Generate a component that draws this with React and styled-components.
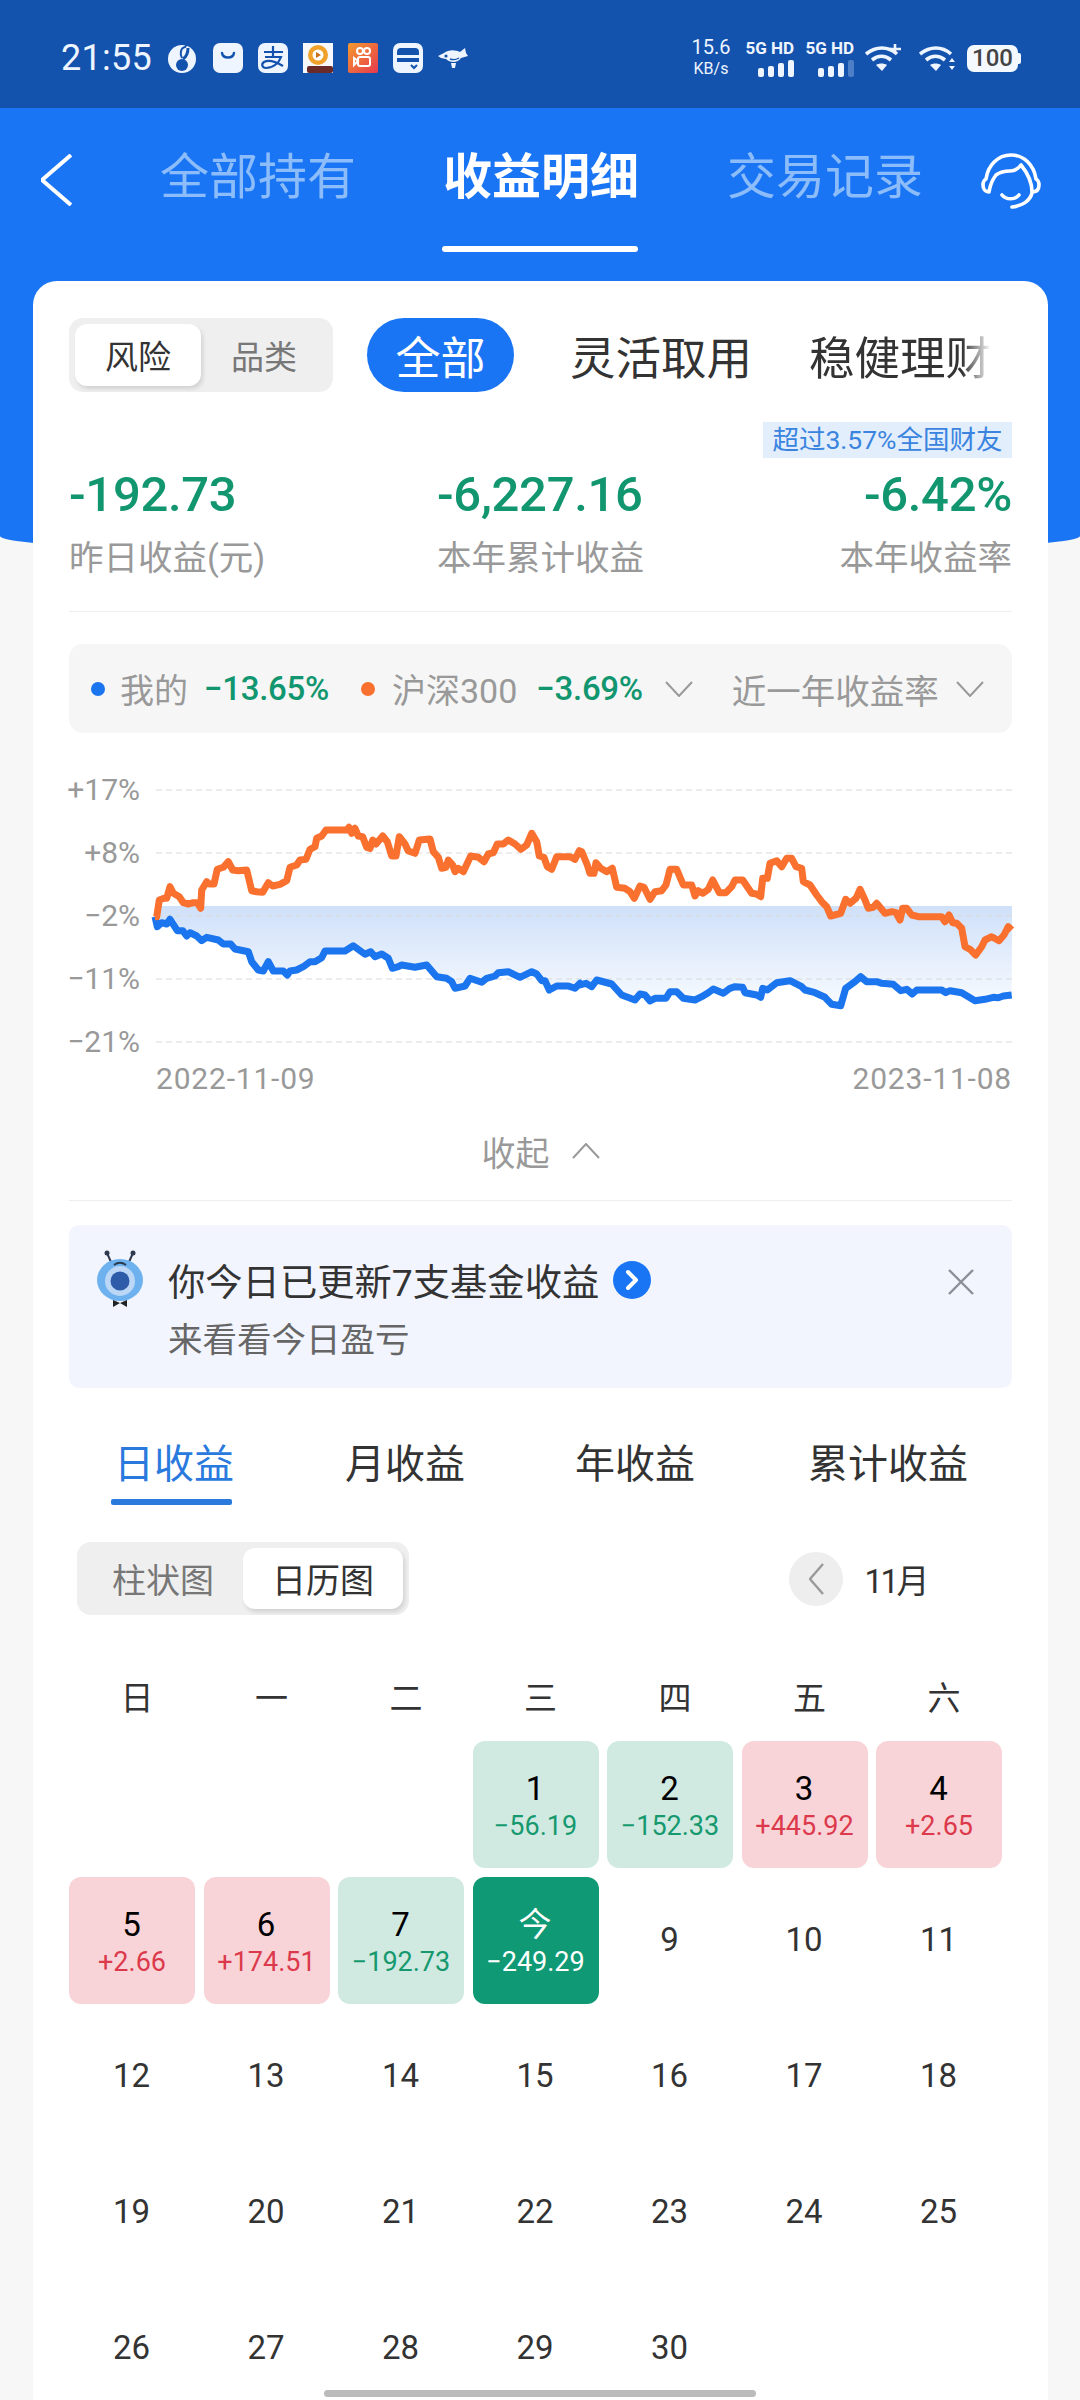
import React from 'react'
import styled, { createGlobalStyle } from 'styled-components'

const GlobalStyle = createGlobalStyle`
  html, body {
    margin: 0;
    padding: 0;
    background: #f7f7f7;
  }
  * {
    box-sizing: border-box;
  }
`

const blue = '#1a75f5'
const green = '#12966f'
const grey = '#999999'
const sans = `Roboto, "Noto Sans CJK SC", sans-serif`

const Page = styled.div`
  position: relative;
  width: 1080px;
  height: 2400px;
  overflow: hidden;
  background: #f7f7f7;
  font-family: ${sans};
  color: #333;
  &::before {
    content: '';
    position: absolute;
    top: 108px;
    left: 0;
    right: 0;
    height: 448px;
    background: ${blue};
    border-radius: 0 0 50% 50% / 0 0 20px 20px;
  }
`

const StatusBar = styled.div`
  position: relative;
  height: 108px;
  padding: 8px 62px 0 61px;
  display: flex;
  align-items: center;
  background: #1352ad;
  color: #eef5ff;
`

const Time = styled.span`
  font-size: 36px;
  width: 107px;
  letter-spacing: 0.3px;
`

const AppIcons = styled.div`
  display: flex;
  gap: 15px;
`

const StatusRight = styled.div`
  margin-left: auto;
  display: flex;
  align-items: center;
`

const Speed = styled.div`
  width: 40px;
  margin-right: 14px;
  display: flex;
  flex-direction: column;
  align-items: center;
  white-space: nowrap;
`

const SpeedValue = styled.span`
  font-size: 20px;
  line-height: 21px;
`

const SpeedUnit = styled.span`
  font-size: 16px;
  line-height: 21px;
`

const Signal = styled.div`
  width: 49px;
  margin-right: 11px;
  display: flex;
  flex-direction: column;
  align-items: flex-end;
  font-size: 17px;
  font-weight: 700;
  line-height: 19px;
  white-space: nowrap;
`

const Bars = styled.div`
  display: flex;
  align-items: flex-end;
  gap: 4px;
  height: 17px;
  margin-top: 2px;
`

const Bar = styled.i`
  display: block;
  width: 6px;
  height: ${p => p.$h}px;
  border-radius: 2px;
  background: ${p => (p.$off ? '#4d7fc6' : '#eef5ff')};
`

const WifiSvg = styled.svg`
  width: 37px;
  height: 30px;
  margin-right: ${p => p.$mr || 0}px;
`

const Battery = styled.div`
  width: 51px;
  height: 27px;
  margin-left: 11px;
  position: relative;
  border-radius: 7px;
  background: #f4f8ff;
  color: #444;
  font-size: 24px;
  font-weight: 500;
  line-height: 27px;
  text-align: center;
  &::after {
    content: '';
    position: absolute;
    right: -3px;
    top: 8px;
    width: 3px;
    height: 11px;
    border-radius: 0 2px 2px 0;
    background: #f4f8ff;
  }
`

const NavBar = styled.div`
  position: relative;
  height: 173px;
  padding-left: 41px;
  display: grid;
  grid-template-columns: 119px 283px 284px 254px 60px;
  align-items: start;
`

const BackBtn = styled.div`
  padding-top: 46px;
  display: flex;
`

const NavTab = styled.div`
  padding-top: 38px;
  width: 196px;
  display: flex;
  flex-direction: column;
  font-size: 49px;
  line-height: 64px;
  font-weight: ${p => (p.$active ? 700 : 400)};
  color: ${p => (p.$active ? '#fff' : '#8cbdfa')};
  white-space: nowrap;
`

const NavLine = styled.div`
  width: 196px;
  height: 6px;
  margin: 36px 0 0 -1px;
  border-radius: 3px;
  background: #fff;
`

const Support = styled.div`
  padding-top: 44px;
  display: flex;
`

const Card = styled.div`
  position: relative;
  width: 1015px;
  height: 2119px;
  margin-left: 33px;
  padding: 37px 36px 0;
  border-radius: 24px 24px 0 0;
  background: #fff;
`

const FilterRow = styled.div`
  height: 74px;
  display: flex;
  align-items: center;
`

const Segment = styled.div`
  display: flex;
  padding: 6px;
  height: ${p => p.$h}px;
  border-radius: 14px;
  background: #efefef;
`

const SegmentItem = styled.div`
  width: ${p => p.$w}px;
  display: flex;
  align-items: center;
  justify-content: center;
  font-size: ${p => p.$size}px;
  border-radius: 12px;
  color: ${p => (p.$active ? '#333' : '#777')};
  background: ${p => (p.$active ? '#fff' : 'transparent')};
  box-shadow: ${p => (p.$active ? '2px 3px 4px rgba(0, 0, 0, 0.12)' : 'none')};
`

const AllPill = styled.div`
  width: 147px;
  height: 74px;
  margin-left: 34px;
  display: flex;
  align-items: center;
  justify-content: center;
  border-radius: 37px;
  background: ${blue};
  color: #fff;
  font-size: 45px;
`

const Filter = styled.div`
  margin-left: ${p => p.$ml}px;
  font-size: 45.5px;
  color: #333;
  white-space: nowrap;
`

const FadedFilter = styled(Filter)`
  width: 182px;
  overflow: hidden;
  -webkit-mask-image: linear-gradient(to right, #000 84%, transparent 100%);
  mask-image: linear-gradient(to right, #000 84%, transparent 100%);
`

const BadgeRow = styled.div`
  margin-top: 30px;
  display: flex;
  justify-content: flex-end;
`

const Badge = styled.div`
  width: 249px;
  height: 36px;
  background: #e3eefc;
  color: #3a84e0;
  font-size: 26.5px;
  line-height: 36px;
  text-align: center;
  white-space: nowrap;
`

const Stats = styled.div`
  margin-top: 7px;
  display: grid;
  grid-template-columns: 368px 1fr auto;
`

const Stat = styled.div`
  display: flex;
  flex-direction: column;
  align-items: ${p => (p.$right ? 'flex-end' : 'flex-start')};
`

const StatValue = styled.div`
  font-size: 49px;
  font-weight: 500;
  line-height: 60px;
  letter-spacing: -0.3px;
  color: ${green};
`

const StatLabel = styled.div`
  margin-top: 11px;
  font-size: 34.5px;
  line-height: 44px;
  color: ${grey};
  white-space: nowrap;
`

const Divider = styled.div`
  height: 1px;
  margin-top: ${p => p.$mt}px;
  background: #eeeeee;
`

const Legend = styled.div`
  height: 89px;
  margin-top: 32px;
  padding-left: 22px;
  display: flex;
  align-items: center;
  border-radius: 14px;
  background: #f6f6f6;
  color: ${grey};
  font-size: 34px;
  white-space: nowrap;
`

const Dot = styled.i`
  display: block;
  width: 14px;
  height: 14px;
  margin-right: ${p => p.$mr}px;
  border-radius: 50%;
  background: ${p => p.$c};
`

const LegendValue = styled.span`
  margin: 0 ${p => p.$mr}px 0 ${p => p.$ml}px;
  font-size: 33px;
  font-weight: 500;
  letter-spacing: -0.3px;
  color: ${green};
`

const LegendRange = styled.span`
  margin-left: 39px;
  font-size: 34.5px;
`

const LegendChevron = styled.svg`
  width: 28px;
  height: 16px;
  margin-left: ${p => p.$ml}px;
`

const ChartRow = styled.div`
  height: 292px;
  margin-top: 37px;
  display: flex;
  align-items: flex-start;
`

const AxisCol = styled.div`
  width: 71px;
  height: 292px;
  margin-right: 16px;
  display: flex;
  flex-direction: column;
  justify-content: space-between;
  align-items: flex-end;
  font-size: 30px;
  line-height: 40px;
  color: ${grey};
  white-space: nowrap;
`

const ChartSvg = styled.svg`
  display: block;
  overflow: visible;
`

const Dates = styled.div`
  margin-top: 2px;
  margin-left: 87px;
  display: flex;
  justify-content: space-between;
  font-size: 30px;
  line-height: 30px;
  letter-spacing: 0.8px;
  color: ${grey};
`

const Collapse = styled.div`
  height: 44px;
  margin-top: 35px;
  display: flex;
  align-items: center;
  justify-content: center;
  gap: 22px;
  font-size: 34px;
  color: ${grey};
`

const Notice = styled.div`
  position: relative;
  height: 163px;
  margin-top: 24px;
  padding: 25px 0 0 28px;
  display: flex;
  align-items: flex-start;
  border-radius: 10px;
  background: #f2f5fe;
`

const NoticeText = styled.div`
  margin: 5px 0 0 25px;
  display: flex;
  flex-direction: column;
  gap: 10px;
`

const NoticeTitle = styled.div`
  height: 50px;
  display: flex;
  align-items: center;
  gap: 14px;
  font-size: 37.3px;
  color: #333;
  white-space: nowrap;
`

const NoticeSub = styled.div`
  font-size: 34.5px;
  line-height: 50px;
  color: #666;
`

const CloseBtn = styled.svg`
  width: 28px;
  height: 28px;
  margin: 18px 37px 0 auto;
`

const Periods = styled.div`
  margin-top: 47px;
  padding-left: 45px;
  display: grid;
  grid-template-columns: 231px 230px 233px auto;
`

const Period = styled.div`
  display: flex;
  flex-direction: column;
  font-size: 40px;
  line-height: 60px;
  color: ${p => (p.$active ? '#2a7ade' : '#333')};
  white-space: nowrap;
`

const PeriodLine = styled.div`
  width: 121px;
  height: 6px;
  margin: 4px 0 0 -3px;
  border-radius: 2px;
  background: #2a7ade;
`

const CalendarBar = styled.div`
  margin: 37px 85px 0 8px;
  display: flex;
  align-items: center;
  justify-content: space-between;
`

const MonthPicker = styled.div`
  display: flex;
  align-items: center;
  gap: 21px;
  font-size: 33px;
  letter-spacing: -2.5px;
  color: #333;
`

const PrevMonth = styled.div`
  width: 54px;
  height: 54px;
  display: flex;
  align-items: center;
  justify-content: center;
  border-radius: 50%;
  background: #eeeeee;
`

const Weekdays = styled.div`
  height: 44px;
  margin-top: 57px;
  padding-left: 5px;
  display: grid;
  grid-template-columns: repeat(7, 126px);
  column-gap: 8.5px;
  align-items: center;
  text-align: center;
  font-size: 33px;
  color: #333;
`

const Calendar = styled.div`
  margin-top: 24.5px;
  display: grid;
  grid-template-columns: repeat(7, 126px);
  grid-auto-rows: 127px;
  column-gap: 8.5px;
  row-gap: 9px;
`

const toneBg = { up: '#f8d4d8', down: '#d0eae2', today: '#0f9a75' }
const toneText = { up: '#dc3a4c', down: '#17996f', today: '#fff' }

const Cell = styled.div`
  grid-column: ${p => p.$col || 'auto'};
  display: flex;
  flex-direction: column;
  align-items: center;
  justify-content: center;
  padding-top: ${p => (p.$tone ? 6 : 0)}px;
  border-radius: 12px;
  background: ${p => toneBg[p.$tone] || 'transparent'};
`

const Day = styled.div`
  font-size: 33px;
  line-height: 38px;
  margin-left: -1px;
  color: ${p => (p.$tone === 'today' ? '#fff' : p.$tone ? '#000' : '#333')};
`

const Amount = styled.div`
  font-size: 27px;
  line-height: 36px;
  color: ${p => toneText[p.$tone]};
`

const HomeBar = styled.div`
  position: absolute;
  left: 324px;
  bottom: 3px;
  width: 432px;
  height: 7px;
  border-radius: 4px;
  background: #bbbbbb;
`

// traced from the reference, x = px / 3 - 16 for the first half and 424 + px / 3 for the second
const orangeA = [[45,440],[50,440],[58,390],[72,385],[80,385],[90,350],[100,370],[118,380],[130,398],[145,402],[160,398],[172,398],[182,415],[185,360],[200,335],[208,342],[222,342],[232,298],[250,292],[265,275],[278,300],[295,302],[320,300],[335,362],[350,365],[368,367],[385,338],[398,348],[420,343],[440,332],[450,292],[470,285],[480,270],[498,268],[510,238],[525,230],[530,205],[545,198],[558,180],[620,180],[627,172],[635,190],[645,175],[655,198],[668,200],[680,232],[690,235],[698,210],[708,222],[728,198],[742,215],[755,258],[768,258],[778,200],[795,222],[805,243],[825,250],[838,210],[870,207],[880,245],[895,262],[905,295],[918,292],[925,270],[938,285],[945,305],[955,295],[970,305],[992,258],[1015,262],[1032,275],[1045,252],[1060,248],[1072,222],[1090,222],[1105,210],[1125,222],[1143,238],[1160,225],[1175,190],[1190,215],[1198,258],[1212,262],[1222,290],[1235,298],[1250,260],[1290,260],[1305,268],[1318,242]]
const orangeB = [[5,245],[22,285],[30,310],[42,310],[48,278],[62,295],[80,305],[97,295],[110,352],[135,355],[150,365],[163,385],[180,348],[192,352],[210,388],[225,365],[245,362],[258,345],[270,298],[290,298],[310,345],[335,345],[345,378],[355,362],[368,370],[385,358],[398,330],[418,368],[438,368],[455,350],[465,330],[488,330],[505,355],[515,370],[530,372],[542,380],[548,325],[562,325],[570,280],[590,272],[605,290],[620,265],[635,265],[648,290],[665,295],[670,335],[690,345],[710,375],[725,395],[740,410],[752,438],[782,430],[797,388],[810,400],[828,385],[840,358],[855,390],[865,415],[880,412],[890,400],[915,430],[935,425],[948,428],[960,450],[968,415],[980,415],[995,435],[1015,440],[1085,440],[1095,455],[1107,435],[1118,458],[1130,460],[1145,475],[1155,530],[1170,538],[1187,555],[1205,530],[1215,510],[1235,500],[1257,512],[1272,495],[1285,470],[1295,480]]
const blueA = [[45,440],[52,470],[65,458],[80,462],[90,448],[112,482],[128,482],[140,498],[150,488],[170,498],[185,512],[200,502],[235,510],[250,522],[272,522],[285,537],[325,545],[335,575],[355,600],[370,603],[385,575],[400,603],[430,603],[442,615],[450,603],[470,600],[490,590],[510,575],[525,575],[545,563],[555,543],[615,543],[640,527],[675,553],[692,545],[705,560],[725,552],[745,565],[757,595],[775,590],[785,585],[825,592],[860,585],[890,620],[920,625],[935,635],[945,655],[975,648],[990,625],[1025,637],[1040,625],[1065,618],[1075,608],[1105,605],[1140,622],[1175,605],[1190,612],[1205,632],[1215,632],[1228,660],[1250,648],[1285,648],[1305,655],[1320,640]]
const blueB = [[0,645],[18,640],[35,650],[50,630],[95,642],[125,675],[165,690],[180,672],[195,675],[210,693],[225,685],[258,685],[270,665],[290,665],[310,685],[345,690],[365,680],[385,668],[400,657],[430,670],[450,655],[465,650],[488,652],[495,668],[530,675],[542,682],[548,655],[562,660],[590,638],[630,632],[665,650],[675,660],[705,668],[735,682],[755,703],[782,707],[797,655],[825,635],[842,620],[860,635],[890,635],[905,640],[940,643],[962,662],[980,658],[997,672],[1010,660],[1085,660],[1097,668],[1110,662],[1145,668],[1185,692],[1215,688],[1240,682],[1255,683],[1270,678],[1295,675]]

const toPoints = (a, b) => [
  ...a.map(([x, y]) => [x / 3 - 16, y / 3]),
  ...b.map(([x, y]) => [424 + x / 3, y / 3])
]
const line = pts => pts.map(([x, y]) => `${x.toFixed(1)},${y.toFixed(1)}`).join(' ')

const orangePts = toPoints(orangeA, orangeB)
const bluePts = toPoints(blueA, blueB)
const bandPts = [[0, 136], [856, 136], ...[...bluePts].reverse()]

const Chart = () => (
  <ChartSvg width="856" height="280" viewBox="0 0 856 280">
    <defs>
      <linearGradient id="band" gradientUnits="userSpaceOnUse" x1="0" y1="136" x2="0" y2="236">
        <stop offset="0" stopColor="#cfe0f9" />
        <stop offset="1" stopColor="#f8fbff" />
      </linearGradient>
    </defs>
    <polygon points={line(bandPts)} fill="url(#band)" />
    {[20, 83, 146, 209, 272].map(y => (
      <line key={y} x1="0" x2="856" y1={y} y2={y} stroke="#d9d9d9" strokeWidth="1" strokeDasharray="6 4" />
    ))}
    <polyline points={line(bluePts)} fill="none" stroke="#1a75ee" strokeWidth="7" strokeLinejoin="round" />
    <polyline points={line(orangePts)} fill="none" stroke="#f9702f" strokeWidth="7" strokeLinejoin="round" />
  </ChartSvg>
)

const MusicIcon = () => (
  <svg width="30" height="30" viewBox="0 0 30 30">
    <circle cx="14" cy="16" r="14" fill="#eef5ff" />
    <path d="M19 1l-2 3c-5 1-5 8-3 11" fill="none" stroke="#1352ad" strokeWidth="2" />
    <circle cx="14" cy="22" r="6" fill="#1352ad" />
    <path d="M15 16c3-2 5-5 5-11" fill="none" stroke="#1352ad" strokeWidth="3" />
  </svg>
)

const SmileIcon = () => (
  <svg width="30" height="30" viewBox="0 0 30 30">
    <rect width="30" height="30" rx="7" fill="#eef5ff" />
    <path d="M9 10c1 6 11 6 12 0" fill="none" stroke="#1352ad" strokeWidth="2.4" strokeLinecap="round" />
  </svg>
)

const AlipayIcon = () => (
  <svg width="30" height="30" viewBox="0 0 30 30">
    <rect width="30" height="30" rx="7" fill="#eef5ff" />
    <path d="M6 9h19M15 3v10M7 14h16c-2 6-8 11-15 11-4 0-5-4-2-6 5-3 14 1 19 4" fill="none" stroke="#1352ad" strokeWidth="2.2" />
  </svg>
)

const CatIcon = () => (
  <svg width="30" height="30" viewBox="0 0 30 30">
    <rect width="30" height="30" fill="#f6f8fb" />
    <circle cx="15" cy="12" r="10" fill="#f0a12a" />
    <circle cx="15" cy="12" r="5.5" fill="#fff" />
    <path d="M13 9l5 3-5 3z" fill="#c8701a" />
    <rect x="4" y="23" width="26" height="7" rx="2" fill="#6a2a28" />
  </svg>
)

const KuaishouIcon = () => (
  <svg width="30" height="30" viewBox="0 0 30 30">
    <defs>
      <linearGradient id="ks" x1="0" y1="0" x2="1" y2="1">
        <stop offset="0" stopColor="#f49a2e" />
        <stop offset="1" stopColor="#e8394e" />
      </linearGradient>
    </defs>
    <rect width="30" height="30" rx="2" fill="url(#ks)" />
    <g fill="none" stroke="#fff" strokeWidth="2">
      <circle cx="12" cy="8" r="3" />
      <circle cx="19" cy="8" r="3" />
      <rect x="10" y="14" width="12" height="9" rx="2" />
      <path d="M10 18l-4-3v7z" />
    </g>
  </svg>
)

const CardIcon = () => (
  <svg width="30" height="30" viewBox="0 0 30 30">
    <rect width="30" height="30" rx="7" fill="#eef5ff" />
    <path d="M4 12V9a4 4 0 0 1 4-4h14a4 4 0 0 1 4 4v3zM4 15h22v4H4z" fill="#1352ad" />
    <path d="M18 22l3 3 3-3" fill="none" stroke="#1352ad" strokeWidth="2" />
  </svg>
)

const DogIcon = () => (
  <svg width="30" height="30" viewBox="0 0 30 30">
    <path d="M0 13l6-3c5-4 12-3 16-1l5-4 1 5 2 3-7 2c-3 5-11 5-15 1l-5-1z" fill="#eef5ff" />
    <path d="M13 20h5l-1 5h-3z" fill="#eef5ff" />
    <circle cx="8" cy="13" r="1.6" fill="#1352ad" />
    <path d="M12 16c3 1 6 1 9-1" fill="none" stroke="#1352ad" strokeWidth="1.4" />
  </svg>
)

const WifiIcon = ({ plus, mr }) => (
  <WifiSvg $mr={mr} viewBox="0 0 37 30" fill="none" stroke="#eef5ff" strokeWidth="3.6">
    <path d="M1 11c10-8 22-8 31 0" />
    <path d="M7 17c6-5 13-5 19 0" />
    <path d="M17 28l-6-6c3-2 8-2 11 0z" fill="#eef5ff" stroke="none" />
    {plus ? (
      <path d="M30 1v10M25 6h11" strokeWidth="2.6" />
    ) : (
      <path d="M30 19l3-4 3 4zM30 23l3 4 3-4z" fill="#eef5ff" stroke="none" />
    )}
  </WifiSvg>
)

const Headset = () => (
  <svg width="60" height="60" viewBox="0 0 60 60" fill="none" stroke="#fff" strokeWidth="3.6" strokeLinecap="round" strokeLinejoin="round">
    <path d="M8 40C4 40 2 37 2 33 2 30 3 28 5 27 7 13 17 3 30 3 43 3 53 13 55 27 57 28 58 30 58 33 58 37 56 40 51 40 51 32 49 24 40 13 37 17 33 19 29 19 23 19 19 20 15 23 11 28 9 34 8 40Z" />
    <path d="M51 41C49 49 41 54 31 55" />
    <path d="M21 43c4 5 13 5 17 0" />
  </svg>
)

const Chevron = ({ dir = 'down', w = 28, h = 16, color = grey, sw = 2 }) => {
  const paths = {
    down: `M1 1L${w / 2} ${h - 1}L${w - 1} 1`,
    up: `M1 ${h - 1}L${w / 2} 1L${w - 1} ${h - 1}`,
    left: `M${w - 1} 1L1 ${h / 2}L${w - 1} ${h - 1}`
  }
  return (
    <svg width={w} height={h} viewBox={`0 0 ${w} ${h}`} fill="none" stroke={color} strokeWidth={sw}>
      <path d={paths[dir]} />
    </svg>
  )
}

const Mascot = () => (
  <svg width="46" height="58" viewBox="0 0 46 58">
    <path d="M14 12L10 3M32 12l4-9" stroke="#2d3a4f" strokeWidth="2" />
    <circle cx="10" cy="3" r="2.5" fill="#2d3a4f" />
    <circle cx="36" cy="3" r="2.5" fill="#2d3a4f" />
    <ellipse cx="23" cy="30" rx="23" ry="21" fill="#6db2ee" />
    <circle cx="23" cy="31" r="15" fill="#bcd6f5" />
    <circle cx="23" cy="31" r="9.5" fill="#2f5ca8" />
    <path d="M17 15c4-3 8-3 12 0" fill="none" stroke="#2d3a4f" strokeWidth="2" />
    <path d="M16 50l7 3-7 4zM30 50l-7 3 7 4z" fill="#222" />
  </svg>
)

const ArrowBadge = () => (
  <svg width="38" height="38" viewBox="0 0 38 38">
    <circle cx="19" cy="19" r="19" fill={blue} />
    <path d="M15 11l8 8-8 8" fill="none" stroke="#fff" strokeWidth="4" strokeLinecap="round" strokeLinejoin="round" />
  </svg>
)

const stats = [
  { value: '-192.73', label: '昨日收益(元)' },
  { value: '-6,227.16', label: '本年累计收益' },
  { value: '-6.42%', label: '本年收益率', right: true }
]

const axis = ['+17%', '+8%', '−2%', '−11%', '−21%']
const weekdays = ['日', '一', '二', '三', '四', '五', '六']

const marked = {
  1: { tone: 'down', amount: '−56.19' },
  2: { tone: 'down', amount: '−152.33' },
  3: { tone: 'up', amount: '+445.92' },
  4: { tone: 'up', amount: '+2.65' },
  5: { tone: 'up', amount: '+2.66' },
  6: { tone: 'up', amount: '+174.51' },
  7: { tone: 'down', amount: '−192.73' },
  8: { tone: 'today', amount: '−249.29', label: '今' }
}

const days = Array.from({ length: 30 }, (_, i) => i + 1)

export default function App() {
  return (
    <Page>
      <GlobalStyle />
      <StatusBar>
        <Time>21:55</Time>
        <AppIcons>
          <MusicIcon />
          <SmileIcon />
          <AlipayIcon />
          <CatIcon />
          <KuaishouIcon />
          <CardIcon />
          <DogIcon />
        </AppIcons>
        <StatusRight>
          <Speed>
            <SpeedValue>15.6</SpeedValue>
            <SpeedUnit>KB/s</SpeedUnit>
          </Speed>
          <Signal>
            5G HD
            <Bars>
              <Bar $h={9} />
              <Bar $h={11} />
              <Bar $h={14} />
              <Bar $h={17} />
            </Bars>
          </Signal>
          <Signal>
            5G HD
            <Bars>
              <Bar $h={9} />
              <Bar $h={11} />
              <Bar $h={14} />
              <Bar $h={17} $off />
            </Bars>
          </Signal>
          <WifiIcon plus mr={17} />
          <WifiIcon />
          <Battery>100</Battery>
        </StatusRight>
      </StatusBar>

      <NavBar>
        <BackBtn>
          <Chevron dir="left" w={31} h={52} color="#fff" sw={4} />
        </BackBtn>
        <NavTab>全部持有</NavTab>
        <NavTab $active>
          收益明细
          <NavLine />
        </NavTab>
        <NavTab>交易记录</NavTab>
        <Support>
          <Headset />
        </Support>
      </NavBar>

      <Card>
        <FilterRow>
          <Segment $h={74}>
            <SegmentItem $w={126} $size={33} $active>风险</SegmentItem>
            <SegmentItem $w={126} $size={33}>品类</SegmentItem>
          </Segment>
          <AllPill>全部</AllPill>
          <Filter $ml={56}>灵活取用</Filter>
          <FadedFilter $ml={57}>稳健理财</FadedFilter>
        </FilterRow>

        <BadgeRow>
          <Badge>超过3.57%全国财友</Badge>
        </BadgeRow>

        <Stats>
          {stats.map(s => (
            <Stat key={s.label} $right={s.right}>
              <StatValue>{s.value}</StatValue>
              <StatLabel>{s.label}</StatLabel>
            </Stat>
          ))}
        </Stats>

        <Divider $mt={31} />

        <Legend>
          <Dot $c="#1a75ee" $mr={15} />
          我的
          <LegendValue $ml={16} $mr={32}>−13.65%</LegendValue>
          <Dot $c="#f9702f" $mr={17} />
          沪深300
          <LegendValue $ml={19} $mr={0}>−3.69%</LegendValue>
          <LegendChevron $ml={22} viewBox="0 0 28 16" fill="none" stroke={grey} strokeWidth="2">
            <path d="M1 1L14 15L27 1" />
          </LegendChevron>
          <LegendRange>近一年收益率</LegendRange>
          <LegendChevron $ml={17} viewBox="0 0 28 16" fill="none" stroke={grey} strokeWidth="2">
            <path d="M1 1L14 15L27 1" />
          </LegendChevron>
        </Legend>

        <ChartRow>
          <AxisCol>
            {axis.map(a => (
              <span key={a}>{a}</span>
            ))}
          </AxisCol>
          <Chart />
        </ChartRow>
        <Dates>
          <span>2022-11-09</span>
          <span>2023-11-08</span>
        </Dates>

        <Collapse>
          收起
          <Chevron dir="up" />
        </Collapse>

        <Divider $mt={27} />

        <Notice>
          <Mascot />
          <NoticeText>
            <NoticeTitle>
              你今日已更新7支基金收益
              <ArrowBadge />
            </NoticeTitle>
            <NoticeSub>来看看今日盈亏</NoticeSub>
          </NoticeText>
          <CloseBtn viewBox="0 0 28 28" fill="none" stroke="#8a8f98" strokeWidth="2.4">
            <path d="M2 2L26 26M26 2L2 26" />
          </CloseBtn>
        </Notice>

        <Periods>
          <Period $active>
            日收益
            <PeriodLine />
          </Period>
          <Period>月收益</Period>
          <Period>年收益</Period>
          <Period>累计收益</Period>
        </Periods>

        <CalendarBar>
          <Segment $h={73}>
            <SegmentItem $w={160} $size={34}>柱状图</SegmentItem>
            <SegmentItem $w={160} $size={34} $active>日历图</SegmentItem>
          </Segment>
          <MonthPicker>
            <PrevMonth>
              <Chevron dir="left" w={15} h={32} color="#9a9a9a" sw={2.4} />
            </PrevMonth>
            11月
          </MonthPicker>
        </CalendarBar>

        <Weekdays>
          {weekdays.map(w => (
            <div key={w}>{w}</div>
          ))}
        </Weekdays>

        <Calendar>
          {days.map(d => {
            const m = marked[d]
            return (
              <Cell key={d} $tone={m && m.tone} $col={d === 1 ? 4 : undefined}>
                <Day $tone={m && m.tone}>{(m && m.label) || d}</Day>
                {m && <Amount $tone={m.tone}>{m.amount}</Amount>}
              </Cell>
            )
          })}
        </Calendar>
      </Card>
      <HomeBar />
    </Page>
  )
}
